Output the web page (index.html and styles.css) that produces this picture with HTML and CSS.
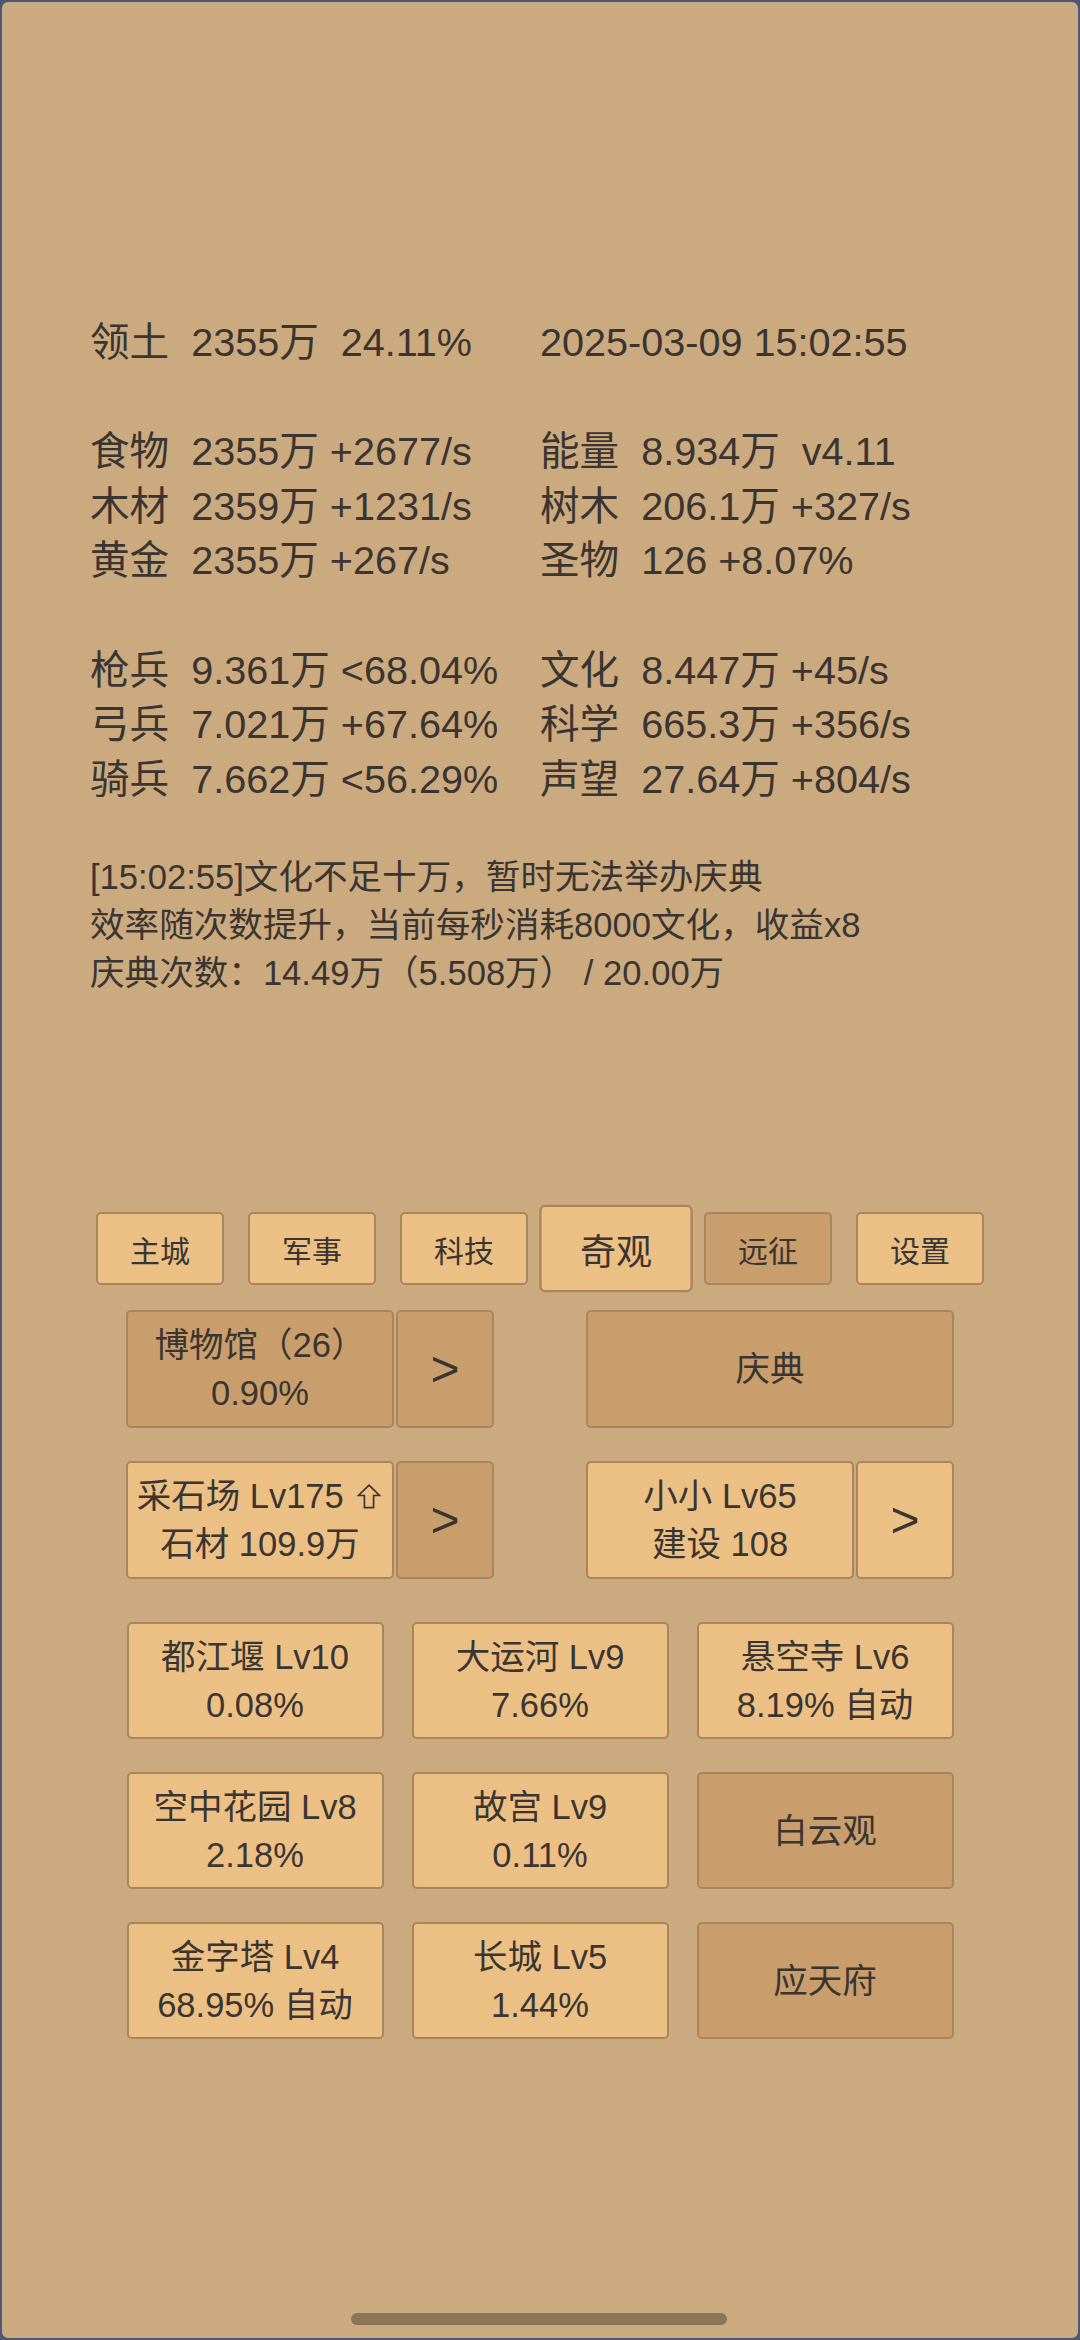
FILE: index.html
```html
<!DOCTYPE html>
<html lang="zh-CN">
<head>
<meta charset="utf-8">
<title>奇观</title>
<link rel="stylesheet" href="styles.css">
</head>
<body>
<div class="screen">
  <section class="stats">
    <div class="row"><span class="cell">领土  2355万  24.11%</span><span class="cell">2025-03-09 15:02:55</span></div>
    <div class="blank"></div>
    <div class="row"><span class="cell">食物  2355万 +2677/s</span><span class="cell">能量  8.934万  v4.11</span></div>
    <div class="row"><span class="cell">木材  2359万 +1231/s</span><span class="cell">树木  206.1万 +327/s</span></div>
    <div class="row"><span class="cell">黄金  2355万 +267/s</span><span class="cell">圣物  126 +8.07%</span></div>
    <div class="blank"></div>
    <div class="row"><span class="cell">枪兵  9.361万 &lt;68.04%</span><span class="cell">文化  8.447万 +45/s</span></div>
    <div class="row"><span class="cell">弓兵  7.021万 +67.64%</span><span class="cell">科学  665.3万 +356/s</span></div>
    <div class="row"><span class="cell">骑兵  7.662万 &lt;56.29%</span><span class="cell">声望  27.64万 +804/s</span></div>
  </section>

  <section class="log">
    <p>[15:02:55]文化不足十万，暂时无法举办庆典</p>
    <p>效率随次数提升，当前每秒消耗8000文化，收益x8</p>
    <p>庆典次数：14.49万（5.508万） / 20.00万</p>
  </section>

  <nav class="tabs">
    <div class="tab">主城</div>
    <div class="tab">军事</div>
    <div class="tab">科技</div>
    <div class="tab active">奇观</div>
    <div class="tab dark">远征</div>
    <div class="tab">设置</div>
  </nav>

  <section class="pairs">
    <div class="pair-row">
      <div class="group">
        <div class="btn main dark"><span>博物馆（26）</span><span>0.90%</span></div>
        <div class="btn arrow dark">&gt;</div>
      </div>
      <div class="group">
        <div class="btn wide dark"><span>庆典</span></div>
      </div>
    </div>
    <div class="pair-row">
      <div class="group">
        <div class="btn main"><span>采石场 Lv175 <svg class="up" viewBox="0 0 24 25" width="24" height="25" aria-label="升级"><path d="M12 1.2 L22.5 11.5 H16.6 V23.6 H7.4 V11.5 H1.5 Z" fill="none" stroke="#3a3531" stroke-width="1.7" stroke-linejoin="miter"/></svg></span><span>石材 109.9万</span></div>
        <div class="btn arrow dark">&gt;</div>
      </div>
      <div class="group">
        <div class="btn main"><span>小小 Lv65</span><span>建设 108</span></div>
        <div class="btn arrow">&gt;</div>
      </div>
    </div>
  </section>

  <section class="grid">
    <div class="btn"><span>都江堰 Lv10</span><span>0.08%</span></div>
    <div class="btn"><span>大运河 Lv9</span><span>7.66%</span></div>
    <div class="btn"><span>悬空寺 Lv6</span><span>8.19% 自动</span></div>
    <div class="btn"><span>空中花园 Lv8</span><span>2.18%</span></div>
    <div class="btn"><span>故宫 Lv9</span><span>0.11%</span></div>
    <div class="btn dark"><span>白云观</span></div>
    <div class="btn"><span>金字塔 Lv4</span><span>68.95% 自动</span></div>
    <div class="btn"><span>长城 Lv5</span><span>1.44%</span></div>
    <div class="btn dark"><span>应天府</span></div>
  </section>

  <div class="home-bar"></div>
</div>
</body>
</html>
```

FILE: styles.css
```css
* { box-sizing: border-box; }

html, body {
  margin: 0;
  padding: 0;
  background: #4d5676;
}

body {
  font-family: "Liberation Sans", "Noto Sans CJK SC", sans-serif;
  color: #3a3531;
}

.screen {
  position: relative;
  width: 1080px;
  height: 2340px;
  border: 2px solid #4d5676;
  border-radius: 8px;
  background: #cbaa80;
  display: flex;
  flex-direction: column;
  overflow: hidden;
}

/* stats */
.stats {
  margin-top: 313px;
  margin-left: 88px;
  width: 900px;
  font-size: 39.6px;
  line-height: 54.6px;
}

.row {
  display: grid;
  grid-template-columns: 450px 450px;
}

.cell {
  white-space: pre;
}

.blank {
  height: 54.6px;
}

/* log */
.log {
  margin-top: 48px;
  margin-left: 88px;
  font-size: 34.6px;
  line-height: 47.7px;
}

.log p {
  margin: 0;
  white-space: pre;
}

/* tabs */
.tabs {
  margin-top: 215px;
  display: flex;
  justify-content: center;
  gap: 24px;
}

.tab {
  width: 128px;
  height: 73px;
  display: flex;
  align-items: center;
  justify-content: center;
  font-size: 30px;
  background: #ecc085;
  border: 2px solid #a8855a;
  border-radius: 5px;
}

.tab.dark {
  background: #c99e6c;
}

.tab.active {
  transform: scale(1.2);
}

/* buttons */
.btn {
  display: flex;
  flex-direction: column;
  align-items: center;
  justify-content: center;
  font-size: 34.5px;
  line-height: 48px;
  background: #ecc085;
  border: 2px solid #a8855a;
  border-radius: 5px;
  white-space: nowrap;
}

.btn.dark {
  background: #c99e6c;
}

.pairs {
  margin-top: 25px;
  display: flex;
  flex-direction: column;
  gap: 33px;
}

.pair-row {
  display: flex;
  justify-content: center;
  gap: 92px;
  height: 118px;
}

.group {
  display: flex;
  gap: 2px;
  width: 368px;
}

.btn.main {
  width: 268px;
}

.btn.arrow {
  width: 98px;
  font-size: 50px;
}

.btn.wide {
  width: 368px;
}

.up {
  display: inline-block;
  width: 24px;
  height: 25px;
  vertical-align: -1px;
  margin-left: 4px;
  margin-right: 2px;
}

.grid {
  margin-top: 43px;
  align-self: center;
  display: grid;
  grid-template-columns: repeat(3, 257px);
  grid-auto-rows: 117px;
  column-gap: 28px;
  row-gap: 33px;
}

.home-bar {
  position: absolute;
  left: 349px;
  bottom: 13px;
  width: 376px;
  height: 12px;
  border-radius: 6px;
  background: #8b7658;
}
```
